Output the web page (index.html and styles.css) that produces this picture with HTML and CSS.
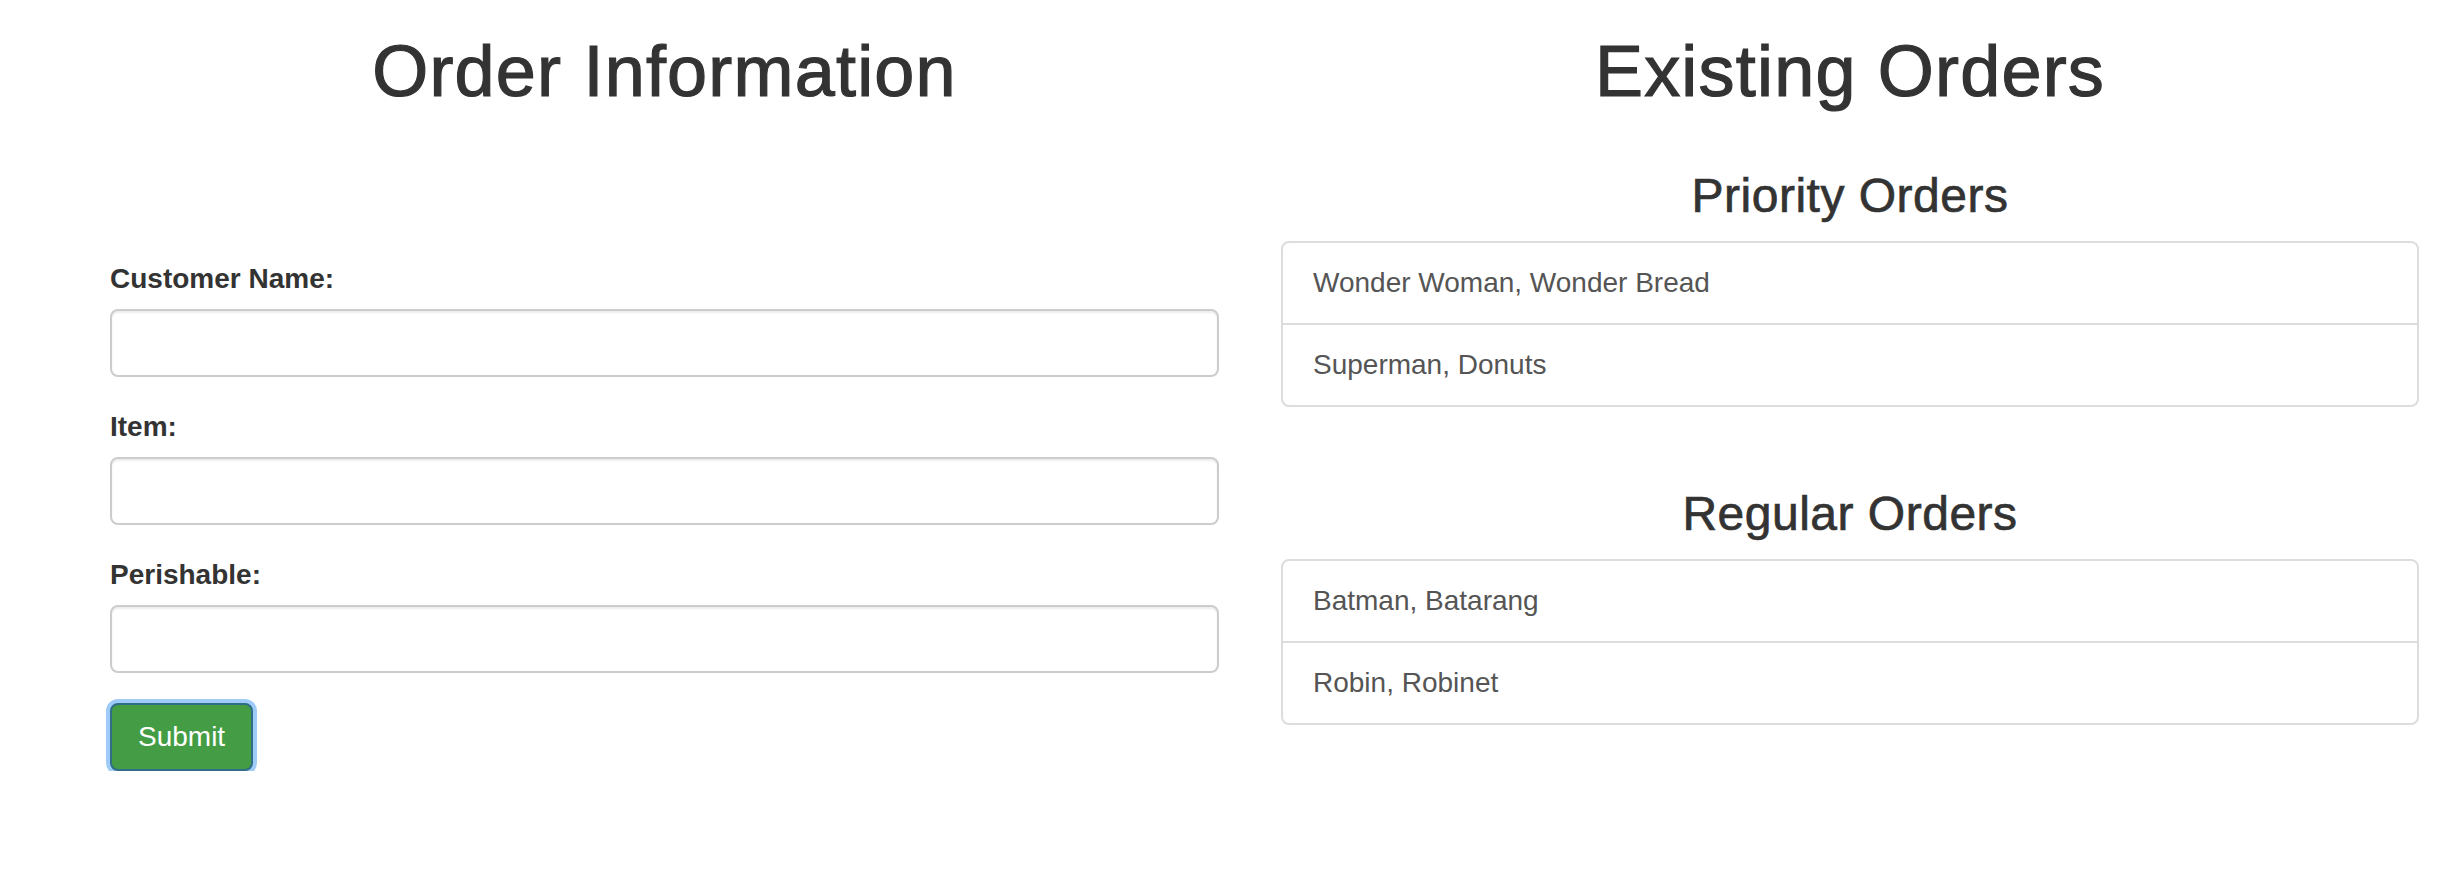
FILE: index.html
```html
<!DOCTYPE html>
<html lang="en">
<head>
<meta charset="utf-8">
<title>Orders</title>
<link rel="stylesheet" href="styles.css">
</head>
<body>
<div class="page">
  <div class="col col-left">
    <h1 class="title">Order Information</h1>
    <form class="order-form">
      <div class="form-group">
        <label class="label" for="name">Customer Name:</label>
        <input class="input" id="name" type="text">
      </div>
      <div class="form-group">
        <label class="label" for="item">Item:</label>
        <input class="input" id="item" type="text">
      </div>
      <div class="form-group">
        <label class="label" for="perishable">Perishable:</label>
        <input class="input" id="perishable" type="text">
      </div>
      <button class="btn-submit" type="button">Submit</button>
    </form>
  </div>
  <div class="col col-right">
    <h1 class="title">Existing Orders</h1>
    <section class="orders orders-priority">
      <h3 class="subtitle">Priority Orders</h3>
      <ul class="list">
        <li class="list-item">Wonder Woman, Wonder Bread</li>
        <li class="list-item">Superman, Donuts</li>
      </ul>
    </section>
    <section class="orders orders-regular">
      <h3 class="subtitle">Regular Orders</h3>
      <ul class="list">
        <li class="list-item">Batman, Batarang</li>
        <li class="list-item">Robin, Robinet</li>
      </ul>
    </section>
  </div>
</div>
</body>
</html>
```
FILE: styles.css
```css
* { box-sizing: border-box; }

html, body {
  margin: 0;
  padding: 0;
  background: #fff;
}

body {
  font-family: "Liberation Sans", Arial, Helvetica, sans-serif;
  font-size: 28px;
  line-height: 40px;
  color: #333;
}

.page {
  display: flex;
  align-items: flex-start;
  padding: 0 35px 0 110px;
  gap: 62px;
}

.col-left { width: 1109px; flex: none; }
.col-right { flex: 1; min-width: 0; }

.title {
  margin: 32px 0 0;
  font-size: 72px;
  line-height: 79px;
  font-weight: 500;
  letter-spacing: 1.2px;
  -webkit-text-stroke: 1.2px #333;
  text-align: center;
  color: #333;
}

.order-form { margin-top: 148px; }

.form-group { margin-bottom: 30px; }

.label {
  display: block;
  font-weight: 700;
  margin-bottom: 10px;
  color: #333;
}

.input {
  display: block;
  width: 100%;
  height: 68px;
  padding: 12px 24px;
  font: inherit;
  color: #555;
  background: #fff;
  border: 2px solid #ccc;
  border-radius: 8px;
  box-shadow: inset 0 2px 2px rgba(0, 0, 0, 0.075);
}

.btn-submit {
  display: inline-block;
  height: 68px;
  padding: 12px 26px;
  font: inherit;
  color: #fff;
  background: #449d44;
  border: 2px solid #2f6e86;
  border-radius: 8px;
  box-shadow: 0 0 0 4px #9fcbf8;
  cursor: pointer;
}

.orders-priority { margin-top: 58px; }
.orders-regular { margin-top: 80px; }

.subtitle {
  margin: 0 0 19px;
  font-size: 48px;
  line-height: 53px;
  font-weight: 500;
  letter-spacing: 0.5px;
  -webkit-text-stroke: 0.7px #333;
  text-align: center;
  color: #333;
}

.list {
  list-style: none;
  margin: 0;
  padding: 0;
  border: 2px solid #ddd;
  border-radius: 8px;
}

.list-item {
  padding: 20px 30px;
  color: #555;
}

.list-item + .list-item { border-top: 2px solid #ddd; }
```
